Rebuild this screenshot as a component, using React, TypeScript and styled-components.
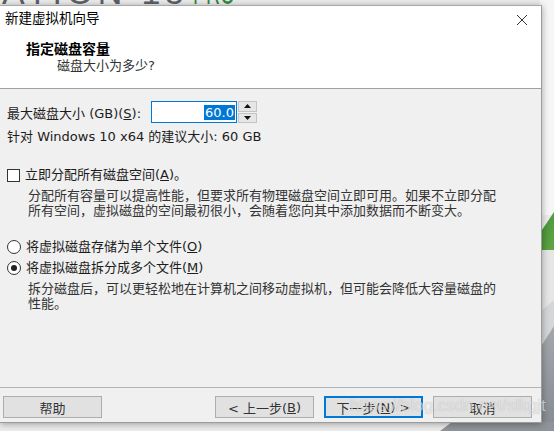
import styled, { createGlobalStyle } from "styled-components";

const GlobalStyle = createGlobalStyle`
  html, body {
    margin: 0;
    padding: 0;
  }
  body {
    width: 554px;
    height: 431px;
    overflow: hidden;
    background: #ececec;
  }
`;

const Desktop = styled.div`
  position: relative;
  width: 554px;
  height: 431px;
  overflow: hidden;
  padding-top: 5px;
  box-sizing: border-box;
  font-family: "DejaVu Sans", "Noto Sans CJK SC", sans-serif;
  font-size: 13px;
  color: #1c1c1c;
`;

const Wallpaper = styled.svg`
  position: absolute;
  left: 0;
  top: 0;
`;

const Window = styled.div`
  position: relative;
  width: 542px;
  height: 418px;
  box-sizing: border-box;
  border-top: 1px solid #a8a8a8;
  border-right: 1px solid #9c9c9c;
  border-bottom: 1px solid #9c9c9c;
  display: flex;
  flex-direction: column;
  background: #f0f0f0;
  box-shadow: 0 1px 7px rgba(0, 0, 0, 0.35);
`;

const Header = styled.div`
  height: 83px;
  box-sizing: border-box;
  background: #ffffff;
  border-bottom: 1px solid #a0a0a0;
`;

const TitleBar = styled.div`
  height: 28px;
  display: flex;
  justify-content: space-between;
  align-items: flex-start;
`;

const WindowTitle = styled.div`
  padding-left: 5px;
  line-height: 22px;
  font-family: "Noto Sans CJK SC", sans-serif;
  font-size: 13.5px;
  color: #000;
`;

const CloseButton = styled.div`
  width: 38px;
  height: 28px;
  display: flex;
  align-items: center;
  justify-content: center;
`;

const PageTitle = styled.div`
  padding: 6px 0 0 26px;
  line-height: 17px;
  font-family: "Noto Sans CJK SC", sans-serif;
  font-size: 14px;
  font-weight: 700;
  color: #000;
`;

const PageSubtitle = styled.div`
  padding-left: 57px;
  line-height: 17px;
  color: #333;
`;

const Body = styled.div`
  flex: 1;
  padding-left: 7px;
  display: flex;
  flex-direction: column;
`;

const SizeRow = styled.div`
  margin-top: 12px;
  height: 22px;
  display: flex;
  align-items: center;
`;

const FieldLabel = styled.div`
  width: 144px;
  white-space: nowrap;
`;

const SpinInput = styled.div`
  width: 86px;
  height: 22px;
  box-sizing: border-box;
  border: 1px solid #0078d7;
  background: #fff;
  display: flex;
  align-items: center;
  justify-content: flex-end;
  padding-right: 1px;
`;

const Selected = styled.span`
  background: #0078d7;
  color: #fff;
  font-size: 13px;
  line-height: 15px;
  padding: 0 1px;
`;

const Spinner = styled.div`
  width: 19px;
  height: 22px;
  margin-left: 1px;
  display: flex;
  flex-direction: column;
  gap: 1px;
`;

const SpinButton = styled.div`
  flex: 1;
  box-sizing: border-box;
  border: 1px solid #c4c4c4;
  background: #e6e6e6;
  display: flex;
  align-items: center;
  justify-content: center;
`;

const Line = styled.div<{ $top: number }>`
  margin-top: ${(p) => p.$top}px;
  line-height: 18px;
  white-space: nowrap;
  display: flex;
  align-items: center;
  gap: 5px;
`;

const Box = styled.span`
  width: 13px;
  height: 13px;
  box-sizing: border-box;
  border: 1px solid #333;
  background: #fff;
  flex-shrink: 0;
`;

const Radio = styled.span<{ $checked?: boolean }>`
  width: 14px;
  height: 14px;
  box-sizing: border-box;
  border: 1px solid #333;
  border-radius: 50%;
  background: #fff;
  flex-shrink: 0;
  display: flex;
  align-items: center;
  justify-content: center;
  &::after {
    content: "";
    width: 6px;
    height: 6px;
    border-radius: 50%;
    background: ${(p) => (p.$checked ? "#222" : "transparent")};
  }
`;

const Description = styled.div`
  margin: 4px 0 0 21px;
  width: 472px;
  line-height: 15px;
  color: #333;
`;

const Key = styled.span`
  text-decoration: underline;
`;

const Footer = styled.div`
  height: 35px;
  box-sizing: border-box;
  border-top: 1px solid #b4b4b4;
  padding: 8px 9px 0 3px;
  display: flex;
  align-items: flex-start;
`;

const Button = styled.div<{ $default?: boolean }>`
  width: 99px;
  height: 22px;
  box-sizing: border-box;
  border: 1px solid ${(p) => (p.$default ? "#0078d7" : "#adadad")};
  box-shadow: ${(p) => (p.$default ? "inset 0 0 0 1px #0078d7" : "none")};
  background: #e1e1e1;
  display: flex;
  align-items: center;
  justify-content: center;
  color: #333;
  white-space: nowrap;
`;

const ButtonGroup = styled.div`
  margin-left: auto;
  display: flex;
  gap: 10px;
`;

const Watermark = styled.div`
  position: absolute;
  left: 350px;
  top: 396px;
  font-family: "Liberation Sans", Arial, sans-serif;
  font-size: 17px;
  line-height: 20px;
  color: rgba(255, 255, 255, 0.6);
  text-shadow: 0 0 1px rgba(0, 0, 0, 0.25);
  white-space: nowrap;
`;

function Background() {
  return (
    <Wallpaper width="554" height="431" viewBox="0 0 554 431">
      <defs>
        <linearGradient id="grn" x1="0" y1="0" x2="1" y2="1">
          <stop offset="0" stopColor="#3f8f35" />
          <stop offset="1" stopColor="#62a646" />
        </linearGradient>
        <linearGradient id="gry" x1="0" y1="0" x2="0" y2="1">
          <stop offset="0" stopColor="#a3a8ad" />
          <stop offset="1" stopColor="#858b92" />
        </linearGradient>
      </defs>
      <rect width="554" height="431" fill="#ececec" />
      <rect x="540" y="0" width="14" height="215" fill="#f6f6f6" />
      <rect x="540" y="240" width="14" height="100" fill="#e6e6e6" />
      <polygon points="540,233 554,212 554,250 540,250" fill="url(#grn)" />
      <polygon points="540,312 554,300 554,350 540,350" fill="#d4d6d8" />
      <polygon points="540,348 554,326 554,431 540,431" fill="url(#gry)" />
      <polygon points="440,431 452,422 554,422 554,431" fill="#8e949a" />
      <text
        x="2"
        y="4"
        fontFamily="Liberation Sans, sans-serif"
        fontSize="34"
        fill="#5b6167"
        textLength="182"
        lengthAdjust="spacing"
      >
        ATION 15
      </text>
      <text
        x="193"
        y="4"
        fontFamily="Liberation Sans, sans-serif"
        fontSize="34"
        fill="#2f8a3c"
        textLength="42"
        lengthAdjust="spacingAndGlyphs"
      >
        PRO
      </text>
    </Wallpaper>
  );
}

export default function App() {
  return (
    <>
      <GlobalStyle />
      <Desktop>
        <Background />
        <Window>
          <Header>
            <TitleBar>
              <WindowTitle>新建虚拟机向导</WindowTitle>
              <CloseButton>
                <svg width="12" height="12" viewBox="0 0 12 12">
                  <path d="M1 1 L11 11 M11 1 L1 11" stroke="#333" strokeWidth="1" />
                </svg>
              </CloseButton>
            </TitleBar>
            <PageTitle>指定磁盘容量</PageTitle>
            <PageSubtitle>磁盘大小为多少?</PageSubtitle>
          </Header>

          <Body>
            <SizeRow>
              <FieldLabel>
                最大磁盘大小 (GB)(<Key>S</Key>):
              </FieldLabel>
              <SpinInput>
                <Selected>60.0</Selected>
              </SpinInput>
              <Spinner>
                <SpinButton>
                  <svg width="7" height="4" viewBox="0 0 7 4">
                    <path d="M0 4 L3.5 0 L7 4 Z" fill="#111" />
                  </svg>
                </SpinButton>
                <SpinButton>
                  <svg width="7" height="4" viewBox="0 0 7 4">
                    <path d="M0 0 L7 0 L3.5 4 Z" fill="#111" />
                  </svg>
                </SpinButton>
              </Spinner>
            </SizeRow>
            <Line $top={5}>针对 Windows 10 x64 的建议大小: 60 GB</Line>

            <Line $top={20}>
              <Box />
              <span>
                立即分配所有磁盘空间(<Key>A</Key>)。
              </span>
            </Line>
            <Description>
              分配所有容量可以提高性能，但要求所有物理磁盘空间立即可用。如果不立即分配所有空间，虚拟磁盘的空间最初很小，会随着您向其中添加数据而不断变大。
            </Description>

            <Line $top={20}>
              <Radio />
              <span>
                将虚拟磁盘存储为单个文件(<Key>O</Key>)
              </span>
            </Line>
            <Line $top={3}>
              <Radio $checked />
              <span>
                将虚拟磁盘拆分成多个文件(<Key>M</Key>)
              </span>
            </Line>
            <Description>
              拆分磁盘后，可以更轻松地在计算机之间移动虚拟机，但可能会降低大容量磁盘的性能。
            </Description>
          </Body>

          <Footer>
            <Button>帮助</Button>
            <ButtonGroup>
              <Button>
                &lt; 上一步(<Key>B</Key>)
              </Button>
              <Button $default>
                下一步(<Key>N</Key>) &gt;
              </Button>
              <Button>取消</Button>
            </ButtonGroup>
          </Footer>
        </Window>
        <Watermark>https://blog.csdn.net/slkgjt</Watermark>
      </Desktop>
    </>
  );
}
